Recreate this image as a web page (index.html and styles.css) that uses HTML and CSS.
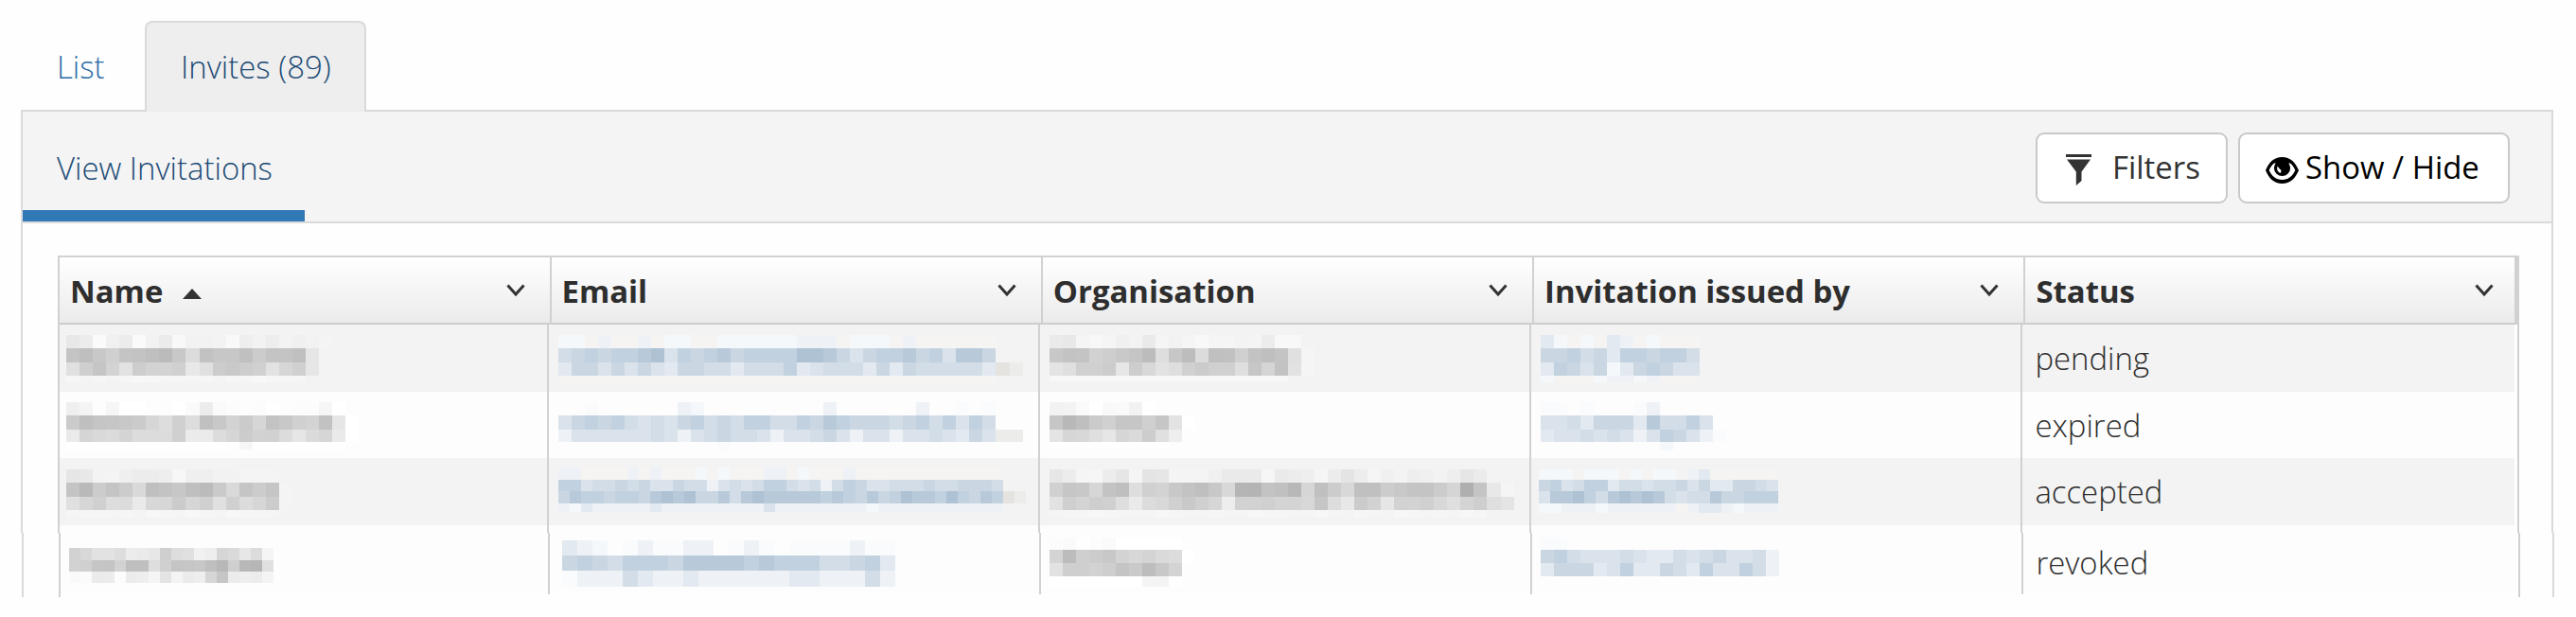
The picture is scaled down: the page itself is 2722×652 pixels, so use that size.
FILE: index.html
```html
<!DOCTYPE html>
<html lang="en">
<head>
<meta charset="utf-8">
<title>Invites</title>
<link rel="stylesheet" href="styles.css">
</head>
<body>
<nav class="tabs">
  <a class="tab">List</a>
  <a class="tab tab-active">Invites (89)</a>
</nav>
<section class="panel">
  <div class="toolbar">
    <a class="subtab">View Invitations</a>
    <div class="actions">
      <button class="btn btn-filter">
        <svg class="funnel" viewBox="0 0 27 33"><path d="M0 0h27v3H0zM1 5.500h25L16.500 18.500v9.500L10.800 33V18.500z"/></svg>
        <span>Filters</span>
      </button>
      <button class="btn btn-show">
        <svg class="eye" viewBox="0 0 35 28"><path fill-rule="evenodd" d="M17.500 0C26 0 31.500 5.500 35 14c-3.500 8.500-9 14-17.500 14S3.500 22.500 0 14C3.500 5.500 9 0 17.500 0zM9 6.500C6.500 8.500 4.800 11 3.700 14c3 6.300 7.300 10 13.800 10s10.800-3.700 13.800-10c-1.100-3-2.800-5.500-5.300-7.500z"/><circle cx="17.500" cy="11.500" r="8.600"/><path d="M12.800 9.500c-1.500 2.800-.3 6 2.800 7.500 1-1.300 1.200-2.600.4-3.800-1.300-.6-2.300-1.800-3.200-3.700z" fill="#fff"/></svg>
        <span>Show / Hide</span>
      </button>
    </div>
  </div>
  <div class="grid">
    <div class="head">
      <div class="hcell"><span>Name</span><svg class="sort" viewBox="0 0 20 11"><path d="M10 0l10 11H0z"/></svg><svg class="chev" viewBox="0 0 20 13"><path d="M1.500 1.500L10 11l8.500-9.500"/></svg></div>
      <div class="hcell"><span>Email</span><svg class="chev" viewBox="0 0 20 13"><path d="M1.500 1.500L10 11l8.500-9.500"/></svg></div>
      <div class="hcell"><span>Organisation</span><svg class="chev" viewBox="0 0 20 13"><path d="M1.500 1.500L10 11l8.500-9.500"/></svg></div>
      <div class="hcell"><span>Invitation issued by</span><svg class="chev" viewBox="0 0 20 13"><path d="M1.500 1.500L10 11l8.500-9.500"/></svg></div>
      <div class="hcell hcell-last"><span>Status</span><svg class="chev" viewBox="0 0 20 13"><path d="M1.500 1.500L10 11l8.500-9.500"/></svg></div>
    </div>
    <div class="rows">
      <div class="row odd r1"><div class="cell"><svg data-m="n1"></svg></div><div class="cell"><svg data-m="e1"></svg></div><div class="cell"><svg data-m="o1"></svg></div><div class="cell"><svg data-m="i1"></svg></div><div class="cell status">pending</div></div>
      <div class="row r2"><div class="cell"><svg data-m="n2"></svg></div><div class="cell"><svg data-m="e2"></svg></div><div class="cell"><svg data-m="o2"></svg></div><div class="cell"><svg data-m="i2"></svg></div><div class="cell status">expired</div></div>
      <div class="row odd r3"><div class="cell"><svg data-m="n3"></svg></div><div class="cell"><svg data-m="e3"></svg></div><div class="cell"><svg data-m="o3"></svg></div><div class="cell"><svg data-m="i3"></svg></div><div class="cell status">accepted</div></div>
      <div class="row lead"><div class="cell"></div><div class="cell"></div><div class="cell"></div><div class="cell"></div><div class="cell"></div></div>
    </div>
  </div>
</section>
<section class="panel panel-rest">
  <div class="grid grid-rest">
    <div class="rows">
      <div class="row r4"><div class="cell"><svg data-m="n4"></svg></div><div class="cell"><svg data-m="e4"></svg></div><div class="cell"><svg data-m="o4"></svg></div><div class="cell"><svg data-m="i4"></svg></div><div class="cell status">revoked</div></div>
    </div>
  </div>
</section>
<script src="mosaic.js"></script>
</body>
</html>
```
FILE: styles.css
```css
* { box-sizing: border-box; }
body {
  margin: 0;
  height: 652px;
  overflow: hidden;
  background: #fefefe;
  color: #2e2e2e;
  font-family: "Open Sans", "Noto Sans", sans-serif;
  font-size: 32.9px;
  font-weight: 300;
  line-height: 47px;
}
svg { display: block; overflow: visible; }
.tabs {
  display: flex;
  height: 116px;
  padding: 22px 0 0 22px;
}
.tab {
  width: 131px;
  height: 96px;
  padding: 25px 0 0 38px;
  color: #2b6ca6;
  white-space: nowrap;
}
.tab-active {
  position: relative;
  width: 234px;
  padding: 23px 0 0 36px;
  background: #eee;
  color: #1d4b75;
  border: 2px solid #dadada;
  border-bottom: 0;
  border-radius: 8px 8px 0 0;
}
.panel {
  width: 2676px;
  height: 447px;
  margin-left: 22px;
  border: 2px solid #dadada;
  border-bottom: 0;
}
.toolbar {
  display: flex;
  justify-content: space-between;
  height: 118px;
  background: #f4f4f4;
  border-bottom: 2px solid #dadada;
}
.subtab {
  width: 298px;
  height: 116px;
  padding: 36px 0 0 36px;
  border-bottom: 12px solid #3178b7;
  color: #1d4b75;
  white-space: nowrap;
}
.actions {
  display: flex;
  gap: 11px;
  padding: 22px 44px 0 0;
}
.btn {
  display: flex;
  align-items: center;
  height: 75px;
  padding: 0 0 1px;
  border: 2px solid #c9c9c9;
  border-radius: 9px;
  background: #fff;
  color: #333;
  font: 400 32.9px/46px "Open Sans", "Noto Sans", sans-serif;
  white-space: nowrap;
}
.btn-filter { width: 203px; padding-left: 30px; gap: 22px; }
.btn-show { width: 287px; padding-left: 27px; gap: 7px; color: #000; }
.funnel { width: 27px; height: 33px; margin-top: 4px; fill: #333; }
.eye { width: 35px; height: 28px; margin-top: 5px; }
.grid {
  margin: 34px 34px 0 37px;
  border: 2px solid #d1d1d1;
  border-bottom: 0;
}
.head {
  display: flex;
  height: 71px;
  border-bottom: 2px solid #cdcdcd;
  background: linear-gradient(#fff, #ebebeb);
  font-weight: 700;
}
.hcell {
  display: flex;
  align-items: center;
  flex: 0 0 519.3px;
  padding: 2px 26px 0 11px;
  border-right: 2px solid #d1d1d1;
  white-space: nowrap;
}
.hcell:first-child { flex-basis: 519.500px; }
.hcell-last { flex: 1; padding-right: 22px; border-right-width: 3px; }
.sort { width: 20px; height: 11px; margin: 5px 0 0 21px; fill: #333; }
.chev { width: 20px; height: 13px; margin: -2px 0 0 auto; fill: none; stroke: #333; stroke-width: 3; }
.rows { padding-right: 3px; }
.row { display: flex; background: #fdfdfd; }
.odd { background: #f3f3f3; }
.cell {
  flex: 0 0 519.3px;
  height: 100%;
  border-right: 2px solid #d1d1d1;
}
.cell:first-child { flex-basis: 516.500px; }
.cell:last-child { flex: 1; border: 0; }
.cell svg { width: 100%; height: 100%; }
.r1 { height: 71px; }
.r2 { height: 70px; }
.r3 { height: 71px; }
.lead { height: 8px; }
.r4 { height: 65px; }
.status { padding: 12px 0 0 13px; }
.r4 .status { padding-top: 8px; }
.panel-rest {
  height: 68px;
  margin-left: 23px;
  border-top: 0;
}
.grid-rest { height: 68px; margin-top: 0; border-top: 0; }
```
FILE: mosaic.js
```javascript
// Redacted values: [tint, x, y, block width, row heights, rows]
// Grey rows hold two-digit hex levels, blue rows hold one-character levels.
const LEVELS = { 1: 0xfa, 2: 0xf5, 3: 0xee, 4: 0xe2, 5: 0xda, 6: 0xd2, 7: 0xca, 8: 0xc2, 9: 0xb8, X: 0xae };
const MOSAICS = {
  n1: ["g", 7, 11, 14.05, [14.3, 14.3, 14.3, 7],
    ["e8ecfaf0ecfaf2ebf8f2f2f3f9eef2edf3f0f2f4", "c4bfc8d0c4c3bfbbc8dcc2c7c7c0ccc4c4c0e6f3", "e0cfc5d3e2cdd3d3d0e8e0ccc9cdd0e2d6d0e6f3", "f6f4f6f4f6f8f7f5f6f5f6f4f6f5f8f6f6f5"]],
  n2: ["g", 7, 11, 14.05, [14.3, 14.3, 13.4, 7.500],
    ["eff4fdf6fffffdfdfffaecfafcfdfcfffdfcfcf6ff", "cbbfc5c6c8cbd6ddd0ddc0c8d3cbd6c3c8d0d3c2e6ff", "ead5d9dbd4dcdcdcd0ebebdcd6ccd2d1dce6dbd6eaff", "fffffffffffffffffffffffffff6ffffffffffffff"]],
  n3: ["g", 7, 12, 14.05, [14.3, 14.3, 14, 8.400],
    ["e6e8f3f4efececeef7efeff2f2f4f4f4", "c4b9ccc4ccd9bfc3c7bfbbcad9c5ccc5f4", "e0d6d0dddcead8d6cbd6d0e0d0dcd6ccf4", "f5f6f6f5f6f4f7f6f5f7f6f5f7f6f6f5"]],
  n4: ["g", 8.700, 16.300, 12.030, [12.2, 12.3, 12.2],
    ["d2d8e2e2ddeceae7cfdde0f1eed6dae7dcf5", "d2d0c5c4d2bfbfded0c5c6c7bfb8cfb8b6e0", "fafbebecfceceef5e4f4ebeed6c6eceeecf4"]],
  e1: ["b", 9.500, 11, 14.03, [14.3, 14.3, 14.3, 9.500],
    ["22w3ww3w22ww222222333w222w3wwwwww", "6787889X5878978888XX9757889785997", "477575754776646668456664747666664gh", "wwwwwwwwwwwwwwwwwwwwwwwwwwwwwwwww"]],
  e2: ["b", 9.500, 11, 14.03, [14.3, 14.3, 13.4, 9],
    ["..1......32.........3......3..1.1", "578786565786768866879877767868586", "355555565356766535567535535565475hh", "............1...................."]],
  e3: ["b", 10.200, 10, 12.050, [13, 12, 12.5, 9.500],
    ["33wwww3w3www2w2www33w2www3wwwwwwwwwwwww", "885667675576635656886563687556667667776", "798878879X9X77969X999998987978X998X8798gh", "324333334333333333533333333233333333333"]],
  e4: ["b", 12.500, 7.700, 16, [16.3, 16.2, 16.3],
    ["432.131133.131.1111311", "7876888799998988866784", "1333643343333334433363"]],
  o1: ["g", 9.500, 11, 14.03, [14.3, 14.3, 14.3, 6],
    ["eae8f5f7f5f0f3eaf5f2f5f8f5f5f3f4ecf8f8f3", "c8c3c4d2cec9c5bcdec7bddcc0c1d0c3bfc4e0f5", "e4dfd0d0cce6cdd8e2ded0cbd0d0dfc6d5c3e2f5", "f7f7f7f7f7f7f7f7f7f7f7f7f7f7f7f7f7f7"]],
  o2: ["g", 9.500, 11, 14.03, [14.3, 14.3, 13.4, 6],
    ["f2f3fafff9faf2fffdfd", "c6b8bfcbd0c6c6d0c6e3ff", "e4d6d8dfe6d6dacde0ee", "ffffffffffffffffff"]],
  o3: ["g", 9.500, 12, 14.03, [14.3, 14.3, 14, 8.400],
    ["e6ecf5f6ece6f5e4e6f4f4f4f0eaeaeaf6eaeceef5ece4ecf5f0f3eef0f3eee6eb", "d0c6c8d6c3bfded0d3c8c3bfc8d8b5b4c3c0b8d6c0ccd8c0c0ccc8c4c4ccd5afc4e8f5", "e2cfd4ced0deeadcd8d0c9d0d6edd2d2d0d4d4d8c6dde8cbd2e6d2d3d0d8dfd4cedfe4", "f5f6f6f7f6f5f5f5f7f6f5f5f6f5f5f7f6f6f5f5f7f5f4f6f5f4f7f6f5f6f5f7f6"]],
  o4: ["g", 8.500, 5, 14.03, [13, 14.3, 14, 11],
    ["fcfafefcfaffffffffff", "d4bccfccc8d3d8d4dadcff", "e2cfcfd2cec4cabdc8d4", "fffffffffffffff4f4ff"]],
  i1: ["b", 9.500, 11, 14.03, [14.3, 14.3, 14.3, 7.500],
    ["42w2w43w2www", "778674887886", "487572478755", "2www23323www"]],
  i2: ["b", 9.500, 11, 14.03, [14.3, 14.3, 13.4, 9],
    ["11.1...13....", "5564777496685", "45565653587531", ".........2..."]],
  i3: ["b", 8.200, 12, 12.050, [11, 12, 12.5, 10.500],
    ["222w222w2w22w34wwwwww", "785688466566757447765", "599X869X9X96566977888", "223332333333w34432333"]],
  i4: ["b", 8.500, 5, 14.03, [13, 14.3, 14, 11],
    ["11................", "786555654465675563", "477745844764855863", ".................."]]
};

function blockColour(tint, code) {
  if (tint === "g") return "#" + code + code + code;
  if (code === "w") return "#f6f4f2";
  if (code === "g") return "#e5e3e0";
  if (code === "h") return "#ececeb";
  const r = LEVELS[code];
  const rest = 255 - r;
  return `rgb(${r},${Math.round(r + rest * 0.25)},${Math.round(r + rest * 0.47)})`;
}

document.querySelectorAll("svg[data-m]").forEach((svg) => {
  const [tint, x, top, width, heights, rows] = MOSAICS[svg.dataset.m];
  const step = tint === "g" ? 2 : 1;
  let y = top;
  let out = "";
  rows.forEach((row, r) => {
    for (let i = 0; i < row.length; i += step) {
      const code = row.slice(i, i + step);
      if (code === ".") continue;
      out += `<rect x="${(x + (i / step) * width).toFixed(2)}" y="${y.toFixed(2)}" width="${width}" height="${heights[r]}" fill="${blockColour(tint, code)}"/>`;
    }
    y += heights[r];
  });
  svg.setAttribute("shape-rendering", "crispEdges");
  svg.innerHTML = out;
});
```
